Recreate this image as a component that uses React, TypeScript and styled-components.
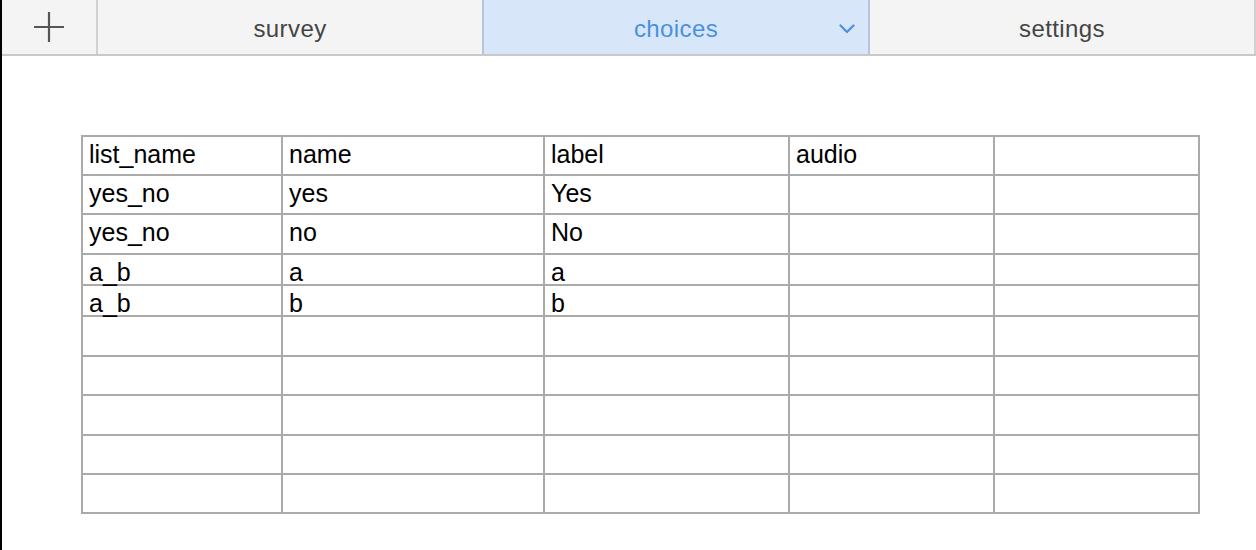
import React from 'react';
import styled, { createGlobalStyle } from 'styled-components';

const GlobalStyle = createGlobalStyle`
  html, body {
    margin: 0;
    padding: 0;
    background: #ffffff;
  }
  #root {
    height: 100vh;
  }
`;

const AppContainer = styled.div`
  display: flex;
  flex-direction: column;
  height: 100%;
  box-sizing: border-box;
  border-left: 2px solid #000000;
  background: #ffffff;
  font-family: "Liberation Sans", Arial, Helvetica, sans-serif;
`;

const TabBar = styled.div`
  display: flex;
  flex-direction: row;
  height: 56px;
  box-sizing: border-box;
  background: #f4f4f4;
  border-bottom: 2px solid #c9c9c9;
`;

const AddButton = styled.button`
  display: flex;
  align-items: center;
  justify-content: center;
  width: 96px;
  height: 100%;
  padding: 0;
  margin: 0;
  box-sizing: border-box;
  background: transparent;
  border: none;
  border-right: 2px solid #d0d0d0;
  cursor: pointer;
`;

const Tab = styled.div<{ $active?: boolean }>`
  position: relative;
  flex: 1;
  display: flex;
  align-items: center;
  justify-content: center;
  height: 100%;
  box-sizing: border-box;
  font-size: 24px;
  letter-spacing: 0.4px;
  color: ${p => (p.$active ? '#4a90e2' : '#444444')};
  background: ${p => (p.$active ? '#d7e7f9' : 'transparent')};
  border-right: 2px solid ${p => (p.$active ? '#b7c5dc' : '#d0d0d0')};
  margin-left: ${p => (p.$active ? '-2px' : '0')};
  border-left: ${p => (p.$active ? '2px solid #b7c5dc' : 'none')};
  padding-top: 4px;
`;

const Chevron = styled.svg`
  position: absolute;
  right: 13px;
  top: 24px;
`;

const Content = styled.div`
  flex: 1;
  padding: 79px 0 0 79px;
`;

const Sheet = styled.table`
  border-collapse: collapse;
  table-layout: fixed;
  width: 1119px;
  font-size: 25px;
  color: #000000;
`;

const Row = styled.tr<{ $h: number }>`
  height: ${p => p.$h}px;
`;

const Cell = styled.td`
  border: 2px solid #aaaaaa;
  padding: 5px 6px 0 6px;
  vertical-align: top;
  line-height: 24px;
  white-space: nowrap;
`;

const columns = [200, 262, 245, 205, 205];

const rows: { h: number; cells: string[] }[] = [
  { h: 39, cells: ['list_name', 'name', 'label', 'audio', ''] },
  { h: 39, cells: ['yes_no', 'yes', 'Yes', '', ''] },
  { h: 40, cells: ['yes_no', 'no', 'No', '', ''] },
  { h: 31, cells: ['a_b', 'a', 'a', '', ''] },
  { h: 31, cells: ['a_b', 'b', 'b', '', ''] },
  { h: 40, cells: ['', '', '', '', ''] },
  { h: 39, cells: ['', '', '', '', ''] },
  { h: 40, cells: ['', '', '', '', ''] },
  { h: 39, cells: ['', '', '', '', ''] },
  { h: 39, cells: ['', '', '', '', ''] },
];

export default function App() {
  return (
    <>
      <GlobalStyle />
      <AppContainer>
        <TabBar>
          <AddButton aria-label="add sheet">
            <svg width="32" height="32" viewBox="0 0 32 32">
              <path d="M16 1v30M1 16h30" stroke="#555555" strokeWidth="2.2" fill="none" />
            </svg>
          </AddButton>
          <Tab>survey</Tab>
          <Tab $active>
            choices
            <Chevron width="16" height="10" viewBox="0 0 16 10">
              <path d="M1.5 1.5l6.5 6.5 6.5-6.5" stroke="#4a90e2" strokeWidth="2.2" fill="none" strokeLinecap="round" strokeLinejoin="round" />
            </Chevron>
          </Tab>
          <Tab>settings</Tab>
        </TabBar>
        <Content>
          <Sheet>
            <colgroup>
              {columns.map((w, i) => (
                <col key={i} style={{ width: w }} />
              ))}
            </colgroup>
            <tbody>
              {rows.map((r, i) => (
                <Row key={i} $h={r.h}>
                  {r.cells.map((c, j) => (
                    <Cell key={j}>{c}</Cell>
                  ))}
                </Row>
              ))}
            </tbody>
          </Sheet>
        </Content>
      </AppContainer>
    </>
  );
}
